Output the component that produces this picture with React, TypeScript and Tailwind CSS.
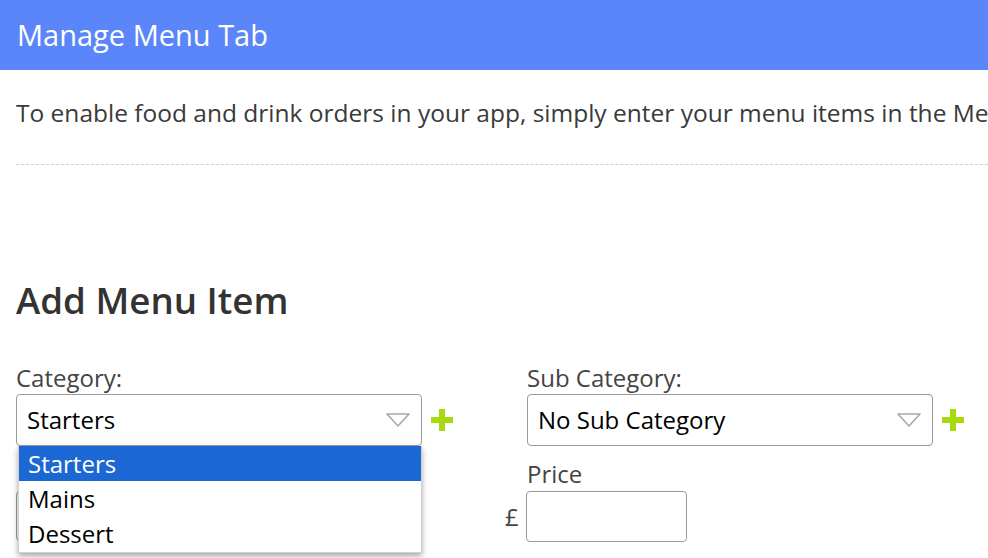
import React from 'react';

const Triangle = () => (
  <svg width="26" height="16" viewBox="0 0 26 16" className="shrink-0">
    <path d="M2 2 L24 2 L13 14 Z" fill="none" stroke="#a8a8a8" strokeWidth="1.6" strokeLinejoin="round" />
  </svg>
);

const Plus = () => (
  <svg width="22" height="22" viewBox="0 0 22 22" className="shrink-0">
    <path d="M8 0 H14 V8 H22 V14 H14 V22 H8 V14 H0 V8 H8 Z" fill="#a8d80f" />
  </svg>
);

const SelectBox = ({ value }: { value: string }) => (
  <div className="flex items-center gap-[9px]">
    <div className="w-[406px] shrink-0 h-[52px] border border-[#9a9a9a] rounded-[4px] bg-white flex items-center justify-between pl-[10px] pr-[10px]">
      <span className="text-[24px] text-black">{value}</span>
      <Triangle />
    </div>
    <Plus />
  </div>
);

export default function App() {
  const options = ['Starters', 'Mains', 'Dessert'];
  return (
    <div className="w-[988px] h-[558px] overflow-hidden bg-white text-[#333]" style={{ fontFamily: '"Open Sans", sans-serif' }}>
      <div className="h-[70px] bg-[#5b86f9] flex items-center px-[17px]">
        <h1 className="text-[29px] text-white whitespace-nowrap">Manage Menu Tab</h1>
      </div>
      <div className="pl-[16px]">
        <p className="mt-[25px] text-[24.5px] leading-[36px] text-[#3a3a3a] whitespace-nowrap">
          To enable food and drink orders in your app, simply enter your menu items in the Menu Tab below.
        </p>
        <div className="mt-[33px] border-t border-dashed border-[#cfcfcf]" />

        <h2 className="mt-[108px] text-[36.7px] leading-[55px] font-semibold text-[#333] whitespace-nowrap">Add Menu Item</h2>

        <div className="mt-[35px] flex">
          <div className="relative w-[511px] shrink-0">
            <div className="text-[24px] text-[#444] leading-[30px]">Category:</div>
            <div className="mt-[1px]">
              <SelectBox value="Starters" />
            </div>
            <div className="mt-[45px] w-[406px] h-[50px] border border-[#9a9a9a] rounded-[4px]" />
            <div className="absolute left-[2px] top-[83px] w-[404px] bg-white shadow-[0_3px_6px_rgba(0,0,0,0.35)] border border-[#d0d0d0] border-t-0 pb-[1px]">
              {options.map((o, i) => (
                <div
                  key={o}
                  className={`h-[35px] flex items-center pl-[9px] text-[24px] ${i === 0 ? 'bg-[#1b67d3] text-white' : 'text-black'}`}
                >
                  {o}
                </div>
              ))}
            </div>
          </div>
          <div className="relative">
            <div className="text-[24px] text-[#444] leading-[30px]">Sub Category:</div>
            <div className="mt-[1px]">
              <SelectBox value="No Sub Category" />
            </div>
            <div className="mt-[13px] text-[24px] text-[#444] leading-[30px]">Price</div>
            <div className="mt-[2px] relative">
              <span className="absolute left-[-22px] top-[8px] text-[24px] text-[#444]">£</span>
              <div className="w-[161px] h-[51px] border border-[#9a9a9a] rounded-[4px] -ml-[1px]" />
            </div>
          </div>
        </div>
      </div>
    </div>
  );
}
